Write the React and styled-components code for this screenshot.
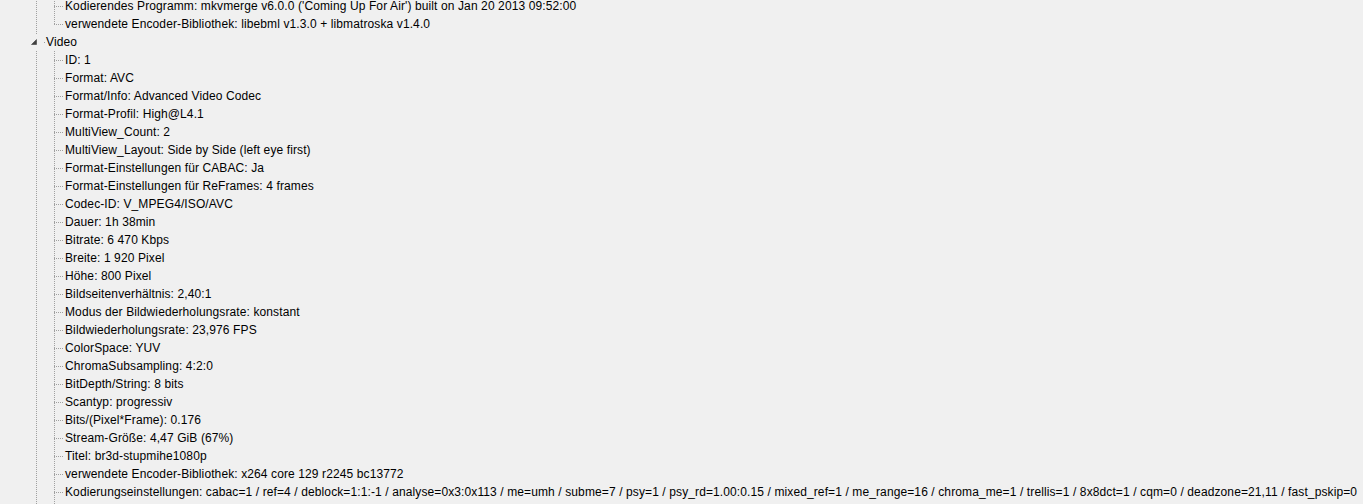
import React from "react";
import styled, { createGlobalStyle } from "styled-components";

const GlobalStyle = createGlobalStyle`
  html, body {
    margin: 0;
    padding: 0;
    background: #f0f0f0;
    overflow: hidden;
  }
`;

const DOT = "#a0a0a0";
const vLine = `repeating-linear-gradient(to bottom, ${DOT} 0 1px, transparent 1px 2px)`;
const hLine = `repeating-linear-gradient(to right, ${DOT} 0 1px, transparent 1px 2px)`;

const Tree = styled.div`
  height: 504px;
  overflow: hidden;
  padding-left: 27px;
  font-family: "Liberation Sans", Arial, sans-serif;
  font-size: 12px;
  letter-spacing: 0.11px;
  color: #000;
  background: #f0f0f0;
`;

const List = styled.div`
  display: flex;
  flex-direction: column;
  margin-top: -3px;
`;

const Row = styled.div`
  display: flex;
  align-items: center;
  height: 18px;
  white-space: nowrap;
`;

// a column that only carries an ancestor's vertical line
const Guide = styled.div`
  flex: 0 0 18px;
  align-self: stretch;
  background-image: ${(p) => (p.$line ? vLine : "none")};
  background-size: 1px 100%;
  background-position: 9px 0;
  background-repeat: no-repeat;
`;

// the column where the item itself hangs off its parent's line
const Connector = styled.div`
  flex: 0 0 18px;
  align-self: stretch;
  display: flex;
  align-items: center;
  background-image: ${vLine}, ${hLine};
  background-size: ${(p) => (p.$last ? "1px 10px" : "1px 100%")}, 9px 1px;
  background-position: 9px 0, 9px 9px;
  background-repeat: no-repeat;
`;

const Expander = styled.span`
  display: flex;
  align-items: center;
  width: 15px;
  height: 16px;
  margin-left: 1px;
  background: #f0f0f0;
  svg {
    margin-left: 3px;
  }
`;

const Label = styled.span`
  padding-left: ${(p) => (p.$top ? "1px" : "2px")};
  line-height: 18px;
`;

const prevSection = [
  "Kodierendes Programm: mkvmerge v6.0.0 ('Coming Up For Air') built on Jan 20 2013 09:52:00",
  "verwendete Encoder-Bibliothek: libebml v1.3.0 + libmatroska v1.4.0",
];

const video = [
  "ID: 1",
  "Format: AVC",
  "Format/Info: Advanced Video Codec",
  "Format-Profil: High@L4.1",
  "MultiView_Count: 2",
  "MultiView_Layout: Side by Side (left eye first)",
  "Format-Einstellungen für CABAC: Ja",
  "Format-Einstellungen für ReFrames: 4 frames",
  "Codec-ID: V_MPEG4/ISO/AVC",
  "Dauer: 1h 38min",
  "Bitrate: 6 470 Kbps",
  "Breite: 1 920 Pixel",
  "Höhe: 800 Pixel",
  "Bildseitenverhältnis: 2,40:1",
  "Modus der Bildwiederholungsrate: konstant",
  "Bildwiederholungsrate: 23,976 FPS",
  "ColorSpace: YUV",
  "ChromaSubsampling: 4:2:0",
  "BitDepth/String: 8 bits",
  "Scantyp: progressiv",
  "Bits/(Pixel*Frame): 0.176",
  "Stream-Größe: 4,47 GiB (67%)",
  "Titel: br3d-stupmihe1080p",
  "verwendete Encoder-Bibliothek: x264 core 129 r2245 bc13772",
  "Kodierungseinstellungen: cabac=1 / ref=4 / deblock=1:1:-1 / analyse=0x3:0x113 / me=umh / subme=7 / psy=1 / psy_rd=1.00:0.15 / mixed_ref=1 / me_range=16 / chroma_me=1 / trellis=1 / 8x8dct=1 / cqm=0 / deadzone=21,11 / fast_pskip=0",
];

const ExpandedGlyph = () => (
  <svg width="6" height="6" viewBox="0 0 6 6">
    <polygon points="5.5,0.5 5.5,5.5 0.5,5.5" fill="#404040" stroke="#404040" strokeWidth="0.6" />
  </svg>
);

function Leaf({ text, last }) {
  return (
    <Row>
      <Guide $line />
      <Connector $last={last} />
      <Label>{text}</Label>
    </Row>
  );
}

export default function App() {
  return (
    <>
      <GlobalStyle />
      <Tree>
        <List>
          {prevSection.map((t, i) => (
            <Leaf key={t} text={t} last={i === prevSection.length - 1} />
          ))}
          <Row>
            <Connector>
              <Expander>
                <ExpandedGlyph />
              </Expander>
            </Connector>
            <Label $top>Video</Label>
          </Row>
          {video.map((t) => (
            <Leaf key={t} text={t} />
          ))}
          <Leaf text="" />
        </List>
      </Tree>
    </>
  );
}
